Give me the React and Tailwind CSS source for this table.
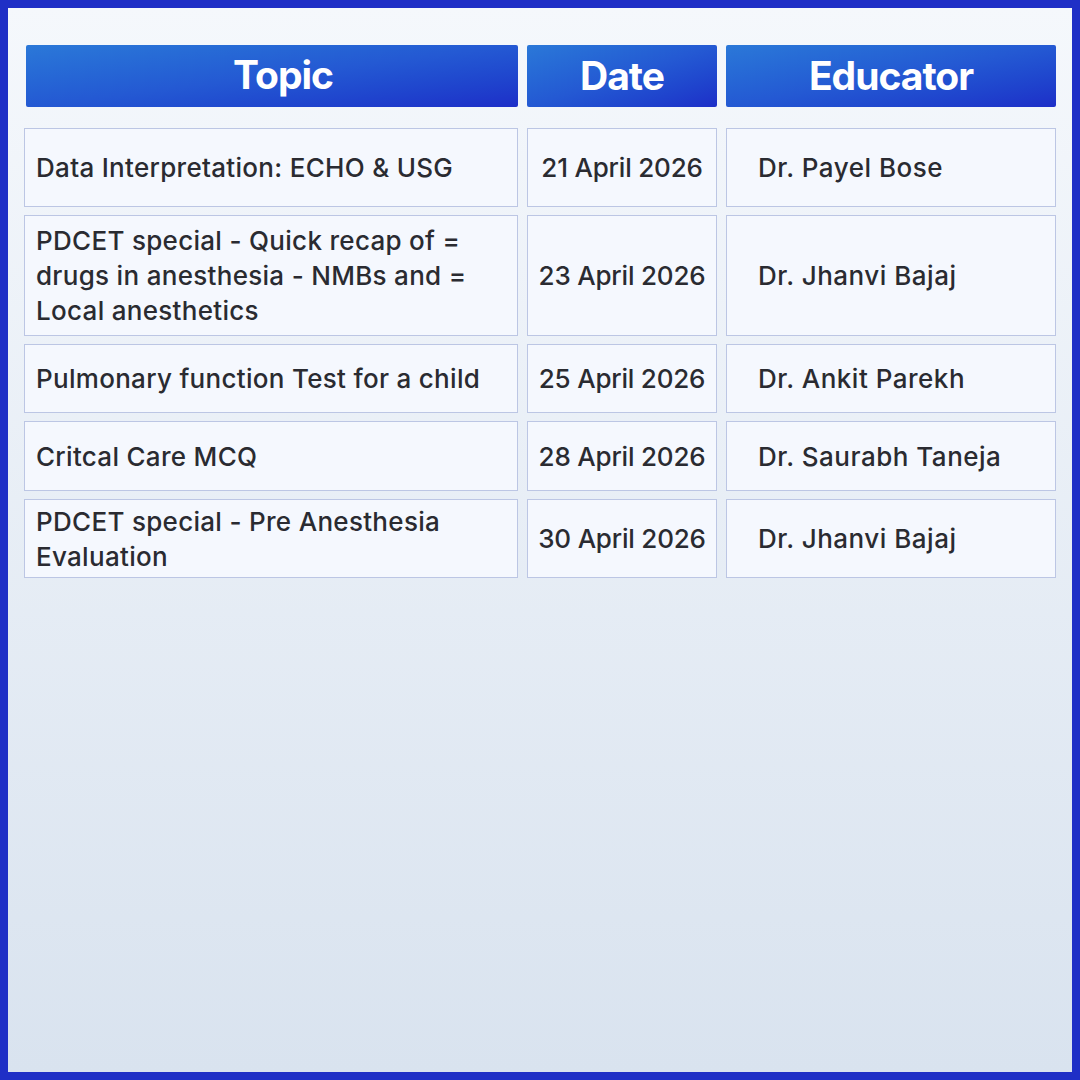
const rows = [
  { topic: ["Data Interpretation: ECHO & USG"], date: "21 April 2026", educator: "Dr. Payel Bose", h: "h-[79px]" },
  {
    topic: ["PDCET special - Quick recap of =", "drugs in anesthesia - NMBs and =", "Local anesthetics"],
    date: "23 April 2026",
    educator: "Dr. Jhanvi Bajaj",
    h: "h-[121px]",
  },
  { topic: ["Pulmonary function Test for a child"], date: "25 April 2026", educator: "Dr. Ankit Parekh", h: "h-[69px]" },
  { topic: ["Critcal Care MCQ"], date: "28 April 2026", educator: "Dr. Saurabh Taneja", h: "h-[70px]" },
  { topic: ["PDCET special - Pre Anesthesia", "Evaluation"], date: "30 April 2026", educator: "Dr. Jhanvi Bajaj", h: "h-[79px]" },
];

const cell =
  "bg-[#f5f8fe] border border-[#bcc6e4] flex items-center text-[26px] leading-[35px] font-medium text-[#2a2b31]";
const head =
  "h-[62px] rounded-[2px] bg-gradient-to-br from-[#2b78d8] via-[#2459d3] to-[#1e2ec8] flex items-center justify-center text-white font-bold text-[39px] tracking-[-1px]";

export default function App() {
  return (
    <div
      className="w-[1080px] h-[1080px] border-[8px] border-[#1f2fc6] bg-gradient-to-b from-[#f5f8fc] to-[#d9e3ef]"
      style={{ fontFamily: "Inter, 'Noto Sans', sans-serif" }}
    >
      <div className="pt-[37px] pl-[16px]">
        <div className="grid grid-cols-[494px_190px_330px] gap-x-[9px]">
          <div className={head + " ml-[2px]"}>
            <span className="ml-[22px] -mt-[2px]">Topic</span>
          </div>
          <div className={head}>Date</div>
          <div className={head}>Educator</div>
        </div>
        <div className="mt-[21px] flex flex-col gap-[8px]">
          {rows.map((r) => (
            <div key={r.date} className={"grid grid-cols-[494px_190px_330px] gap-x-[9px] " + r.h}>
              <div className={cell + " pl-[11px] pr-[4px] tracking-[0.3px]"}>
                <div>
                  {r.topic.map((t) => (
                    <div key={t}>{t}</div>
                  ))}
                </div>
              </div>
              <div className={cell + " justify-center tracking-[-0.2px]"}>{r.date}</div>
              <div className={cell + " pl-[31px] tracking-[0.5px]"}>{r.educator}</div>
            </div>
          ))}
        </div>
      </div>
    </div>
  );
}
